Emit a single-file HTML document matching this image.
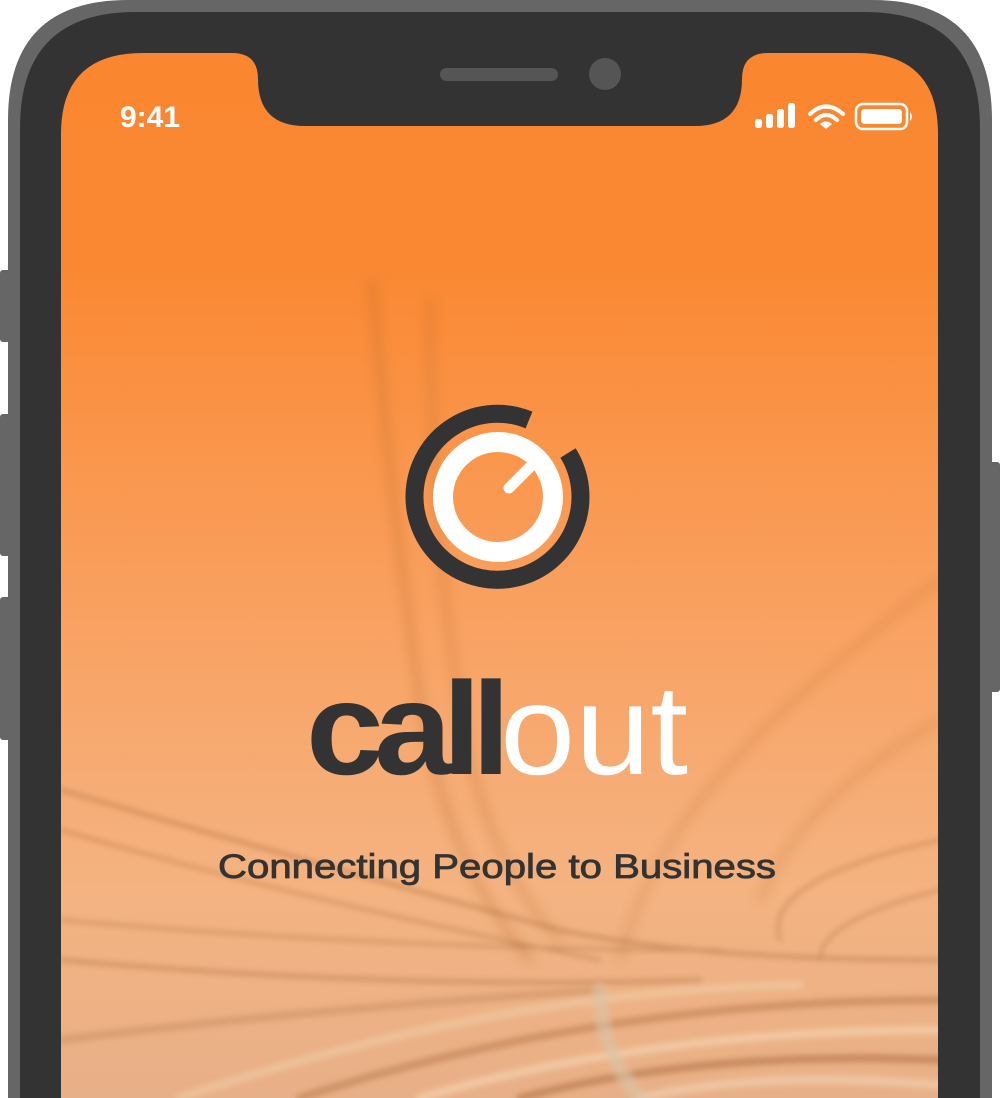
<!DOCTYPE html>
<html><head><meta charset="utf-8"><style>
html,body{margin:0;padding:0;background:#fff;width:1000px;height:1098px;overflow:hidden;font-family:"Liberation Sans",sans-serif}
</style></head><body>
<svg width="1000" height="1098" viewBox="0 0 1000 1098" xmlns="http://www.w3.org/2000/svg" style="position:absolute;left:0;top:0">
<defs>
<linearGradient id="bg" x1="0" y1="0" x2="0" y2="1">
<stop offset="0" stop-color="#fa8630"/>
<stop offset="0.2" stop-color="#fa8832"/>
<stop offset="0.55" stop-color="#f9a263"/>
<stop offset="0.8" stop-color="#f4b381"/>
<stop offset="1" stop-color="#e8b088"/>
</linearGradient>
<filter id="bl" x="-20%" y="-20%" width="140%" height="140%"><feGaussianBlur stdDeviation="3"/></filter>
<filter id="bl2" x="-20%" y="-20%" width="140%" height="140%"><feGaussianBlur stdDeviation="6"/></filter>
<clipPath id="scr"><path d="M143 53 H232 Q258 53 258 79 Q258 126 305 126 H695 Q742 126 742 79 Q742 53 768 53 H857 Q938 53 938 134 V1098 H61 V134 Q61 53 143 53Z"/></clipPath>
</defs>
<rect x="0" y="270" width="12" height="72" rx="3" fill="#666"/>
<rect x="0" y="414" width="12" height="142" rx="3" fill="#666"/>
<rect x="0" y="597" width="12" height="143" rx="3" fill="#666"/>
<rect x="988" y="462" width="12" height="230" rx="3" fill="#666"/>
<path d="M128 0 H872 Q992 0 992 120 V1098 H8 V120 Q8 0 128 0Z" fill="#666"/>
<path d="M136 12 H864 Q980 12 980 128 V1098 H20 V128 Q20 12 136 12Z" fill="#333"/>
<g clip-path="url(#scr)">
<rect x="61" y="53" width="877" height="1045" fill="url(#bg)"/>
<g fill="none" stroke-linecap="round">
<g filter="url(#bl2)" opacity="0.45" stroke="#b86a2c">
<path d="M372 280 Q390 500 420 700 Q445 860 530 960" stroke-width="6"/>
<path d="M430 300 Q430 560 470 760 Q500 880 560 940" stroke-width="5"/>
<path d="M940 580 Q780 700 700 800 Q640 880 620 960" stroke-width="4"/>
<path d="M940 720 Q800 800 760 900" stroke-width="4"/>
</g>
<g filter="url(#bl)" opacity="0.45" stroke="#a86a3a">
<path d="M61 790 Q300 860 560 930 Q700 960 940 960" stroke-width="4"/>
<path d="M61 830 Q300 900 600 960" stroke-width="3"/>
<path d="M61 920 Q400 950 720 950" stroke-width="3"/>
<path d="M61 960 Q400 990 700 980" stroke-width="4"/>
<path d="M940 890 Q820 920 820 960" stroke-width="3"/>
<path d="M940 840 Q760 880 780 940" stroke-width="3"/>
</g>
<g filter="url(#bl)" stroke-width="8">
<path d="M300 1098 Q600 1000 940 1000" stroke="#b87a4a" opacity="0.55"/>
<path d="M420 1098 Q650 1030 940 1030" stroke="#f6d9b8" opacity="0.6"/>
<path d="M520 1098 Q700 1050 940 1060" stroke="#a8663a" opacity="0.5"/>
<path d="M180 1098 Q500 990 800 985" stroke="#f1d0ac" opacity="0.55"/>
<path d="M640 1098 Q760 1070 940 1085" stroke="#f4d6b6" opacity="0.6"/>
<path d="M61 1040 Q300 1010 600 990" stroke="#c08a5c" opacity="0.45"/>
<path d="M600 990 Q600 1050 640 1098" stroke="#d8c4a8" opacity="0.6" stroke-width="14"/>
</g>
</g>
</g>
<rect x="440" y="68" width="118" height="13" rx="6.5" fill="#555"/>
<circle cx="605" cy="74" r="16" fill="#555"/>
<text x="120" y="127" font-family="Liberation Sans,sans-serif" font-weight="bold" font-size="30" fill="#fff">9:41</text>
<g fill="#fff">
<rect x="755" y="119" width="7" height="9" rx="2.5"/>
<rect x="766" y="114" width="7" height="14" rx="2.5"/>
<rect x="777" y="109" width="7" height="19" rx="2.5"/>
<rect x="788" y="103" width="7" height="25" rx="2.5"/>
</g>
<g fill="none" stroke="#fff" stroke-width="4" stroke-linecap="round">
<path d="M810 114 Q826 99 843 114"/>
<path d="M816 120 Q826 110 837 120"/>
</g>
<path d="M820 124 L826 129 L832 124 Q826 119 820 124Z" fill="#fff"/>
<rect x="856" y="104" width="51" height="25" rx="7" fill="none" stroke="#fff" stroke-width="2.5"/>
<rect x="861" y="109" width="41" height="15" rx="3.5" fill="#fff"/>
<path d="M910 112 Q914 116.5 910 121Z" fill="#fff"/>
<!-- logo -->
<path d="M529 420 A83 83 0 1 0 568 453" fill="none" stroke="#333" stroke-width="18"/>
<circle cx="498" cy="497" r="55" fill="none" stroke="#fff" stroke-width="20"/>
<line x1="509" y1="488" x2="531" y2="466" stroke="#fff" stroke-width="11" stroke-linecap="round"/>
<!-- wordmark -->
<text x="306" y="774" font-family="Liberation Sans,sans-serif" font-weight="bold" font-size="132" letter-spacing="-9" fill="#333" textLength="195" lengthAdjust="spacingAndGlyphs">call</text>
<text x="500" y="774" font-family="Liberation Sans,sans-serif" font-size="128" fill="#fff" textLength="188" lengthAdjust="spacingAndGlyphs">out</text>
<text x="218" y="878" font-family="Liberation Sans,sans-serif" font-size="34" fill="#333" stroke="#333" stroke-width="0.8" textLength="558" lengthAdjust="spacingAndGlyphs">Connecting People to Business</text>
</svg>
</body></html>
